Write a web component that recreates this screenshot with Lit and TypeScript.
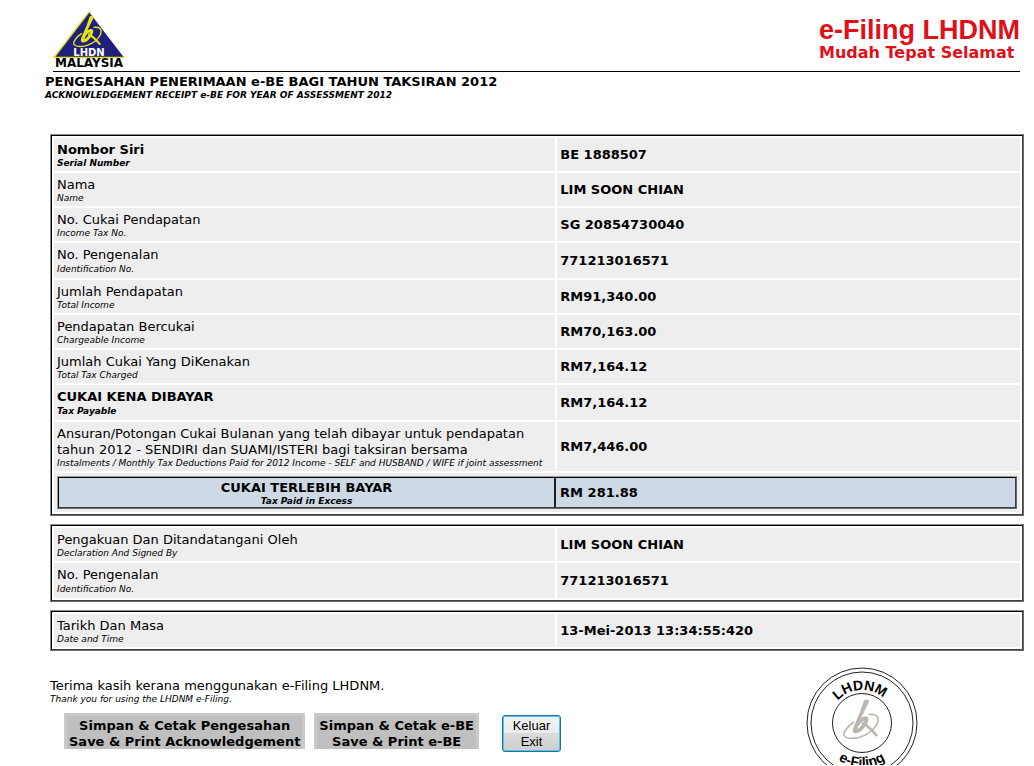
import { LitElement, html, css, svg, nothing } from "lit";
import { customElement } from "lit/decorators.js";
import { classMap } from "lit/directives/class-map.js";

interface Row {
  ms: string[];
  en: string;
  value: string;
  bold?: boolean;
  tall?: boolean;
}

const assessment: Row[] = [
  { ms: ["Nombor Siri"], en: "Serial Number", value: "BE 1888507", bold: true },
  { ms: ["Nama"], en: "Name", value: "LIM SOON CHIAN" },
  { ms: ["No. Cukai Pendapatan"], en: "Income Tax No.", value: "SG 20854730040" },
  { ms: ["No. Pengenalan"], en: "Identification No.", value: "771213016571", tall: true },
  { ms: ["Jumlah Pendapatan"], en: "Total Income", value: "RM91,340.00" },
  { ms: ["Pendapatan Bercukai"], en: "Chargeable Income", value: "RM70,163.00" },
  { ms: ["Jumlah Cukai Yang DiKenakan"], en: "Total Tax Charged", value: "RM7,164.12" },
  { ms: ["CUKAI KENA DIBAYAR"], en: "Tax Payable", value: "RM7,164.12", bold: true, tall: true },
  {
    ms: [
      "Ansuran/Potongan Cukai Bulanan yang telah dibayar untuk pendapatan",
      "tahun 2012 - SENDIRI dan SUAMI/ISTERI bagi taksiran bersama",
    ],
    en: "Instalments / Monthly Tax Deductions Paid for 2012 Income - SELF and HUSBAND / WIFE if joint assessment",
    value: "RM7,446.00",
  },
];

const declaration: Row[] = [
  { ms: ["Pengakuan Dan Ditandatangani Oleh"], en: "Declaration And Signed By", value: "LIM SOON CHIAN" },
  { ms: ["No. Pengenalan"], en: "Identification No.", value: "771213016571", tall: true },
];

const timestamp: Row[] = [
  { ms: ["Tarikh Dan Masa"], en: "Date and Time", value: "13-Mei-2013 13:34:55:420" },
];

// The "hx" monogram, drawn in a 36 x 41 box.
const monogram = svg`
  <path d="M21 1.5 Q24 0 26 1 L25.5 4 L18 19 Q23 16 25 18.5 Q26.5 22 22 28 Q17 34.5 12 34.5
           Q8.5 33.5 10.5 28 L17 13 Z
           M14 30 Q18 28.5 21.5 21.5 Q17.5 22.5 14 30 Z" fill-rule="evenodd" fill="currentColor"/>
  <path d="M19 24 Q26 27 34 37" stroke="currentColor" stroke-width="2.6" fill="none"/>
  <path d="M11 23 Q1 30 .8 36 Q3 41 16 38.5 Q30 34 34.5 24 Q37.5 14 25.5 15.5"
        stroke="currentColor" stroke-width="1.7" fill="none"/>`;

@customElement("app-root")
export class AppRoot extends LitElement {
  static styles = css`
    :host {
      display: block;
      box-sizing: border-box;
      min-height: 100vh;
      padding: 11px 10px 0 50px;
      background: #fff;
      color: #000;
      font: 13px/16px Verdana, "DejaVu Sans", sans-serif;
    }
    .banner {
      display: flex;
      justify-content: space-between;
      height: 60px;
      margin: 0 4px 0 3px;
      border-bottom: 1px solid #000;
    }
    .logo { display: block; width: 72px; height: 58px; }
    .brand { color: #e01018; padding-top: 5px; }
    .brand-name { font: bold 27px/28px "Liberation Sans", Arial, sans-serif; }
    .brand-motto { font: bold 16px/18px "DejaVu Sans", sans-serif; }
    .title { margin: 2px 0 33px -5px; font-size: 13px; line-height: 16px; }
    .en { display: block; font-size: 9px; line-height: 11px; font-style: italic; }
    .ms { display: block; }
    .frame {
      margin-bottom: 8px;
      border: 1px solid;
      border-color: #808a90 #696969 #696969 #808a90;
    }
    .grid {
      width: 100%;
      table-layout: fixed;
      border-collapse: separate;
      border-spacing: 2px;
      border: 1px solid;
      border-color: #000 #404040 #404040 #000;
    }
    .label-col { width: 52%; }
    th, td {
      text-align: left;
      font-weight: normal;
      background: #eee;
      padding: 0 3px;
      vertical-align: middle;
    }
    th { padding: 4px 0 2px 3px; white-space: nowrap; }
    td { font-weight: bold; }
    .bold { font-weight: bold; }
    .tall .en { line-height: 13px; }
    .excess-cell { padding: 3px; }
    .excess-frame {
      border: 1px solid;
      border-color: #a0a0a0 #696969 #696969 #a0a0a0;
    }
    .excess {
      width: 100%;
      table-layout: fixed;
      border-collapse: separate;
      border-spacing: 0;
      border: 1px solid;
      border-color: #000 #404040 #404040 #000;
    }
    .excess th, .excess td { background: #cdd9e5; }
    .excess th {
      padding: 2px 0 0;
      text-align: center;
      font-weight: bold;
      border-right: 2px solid #202020;
    }
    .excess td { padding: 0 4px; }
    .footer { display: flex; justify-content: space-between; padding: 8px 106px 0 0; }
    .thanks { margin: 0; padding-top: 11px; }
    .actions { display: flex; align-items: flex-start; margin-top: 8px; padding-left: 14px; }
    button { font: inherit; color: inherit; cursor: pointer; }
    .save {
      margin-right: 9px;
      height: 36px;
      padding: 2px 2px 0;
      border: 3px solid #c9c9c9;
      border-bottom-width: 0;
      background: #bfbfbf;
      font-weight: bold;
    }
    .exit {
      width: 59px;
      height: 37px;
      margin: 2px 0 0 14px;
      padding: 0;
      border: 1px solid #2c6f96;
      border-radius: 3px;
      box-shadow: inset 0 0 0 1px #48c8f0;
      background: linear-gradient(#f2f2f2, #ebebeb 48%, #dadada 50%, #cfcfcf);
      font: 13px/16px "Liberation Sans", Arial, sans-serif;
    }
    .seal { display: block; flex: none; width: 112px; height: 98px; color: #bcb6ae; }
  `;

  private label(row: Row) {
    return html`${row.ms.map((line) => html`<span class="ms">${line}</span>`)}<span class="en">${row.en}</span>`;
  }

  private grid(rows: Row[], extra: unknown = nothing) {
    return html`
      <div class="frame">
        <table class="grid">
          <colgroup><col class="label-col" /><col /></colgroup>
          <tbody>
            ${rows.map(
              (row) => html`<tr class=${classMap({ tall: !!row.tall })}>
                <th scope="row" class=${classMap({ bold: !!row.bold })}>${this.label(row)}</th>
                <td>${row.value}</td>
              </tr>`
            )}
            ${extra}
          </tbody>
        </table>
      </div>`;
  }

  private excess() {
    return html`<tr>
      <td class="excess-cell" colspan="2">
        <div class="excess-frame">
          <table class="excess">
            <colgroup><col class="label-col" /><col /></colgroup>
            <tbody>
              <tr>
                <th scope="row">${this.label({ ms: ["CUKAI TERLEBIH BAYAR"], en: "Tax Paid in Excess", value: "" })}</th>
                <td>RM 281.88</td>
              </tr>
            </tbody>
          </table>
        </div>
      </td>
    </tr>`;
  }

  render() {
    return html`
      <header class="banner">
        <svg class="logo" viewBox="0 0 72 58" role="img" aria-label="LHDN Malaysia">
          <path d="M36 1 L71 46.5 H1 Z" fill="#20207c" />
          <path d="M36 1 L1 46.5 H71" fill="none" stroke="#dede20" stroke-width="1.4" />
          <g transform="translate(20 4) scale(.8)" color="#e4e41c">${monogram}</g>
          <text x="36" y="45" text-anchor="middle" font-family="DejaVu Sans" font-weight="bold" font-size="10" fill="#fff">LHDN</text>
          <text x="36" y="56" text-anchor="middle" font-family="DejaVu Sans" font-weight="bold" font-size="12">MALAYSIA</text>
        </svg>
        <div class="brand">
          <div class="brand-name">e-Filing LHDNM</div>
          <div class="brand-motto">Mudah Tepat Selamat</div>
        </div>
      </header>
      <h1 class="title">
        <span class="ms">PENGESAHAN PENERIMAAN e-BE BAGI TAHUN TAKSIRAN 2012</span>
        <span class="en">ACKNOWLEDGEMENT RECEIPT e-BE FOR YEAR OF ASSESSMENT 2012</span>
      </h1>
      <main>
        ${this.grid(assessment, this.excess())} ${this.grid(declaration)} ${this.grid(timestamp)}
      </main>
      <footer class="footer">
        <div>
          <p class="thanks">
            <span class="ms">Terima kasih kerana menggunakan e-Filing LHDNM.</span>
            <span class="en">Thank you for using the LHDNM e-Filing.</span>
          </p>
          <div class="actions">
            <button class="save" type="button">Simpan &amp; Cetak Pengesahan<br />Save &amp; Print Acknowledgement</button>
            <button class="save" type="button">Simpan &amp; Cetak e-BE<br />Save &amp; Print e-BE</button>
            <button class="exit" type="button">Keluar<br />Exit</button>
          </div>
        </div>
        <svg class="seal" viewBox="0 0 112 98" role="img" aria-label="LHDNM e-Filing">
          <defs>
            <path id="arc-top" d="M23 56 A33 33 0 0 1 89 56" />
            <path id="arc-bottom" d="M12 56 A44 44 0 0 0 100 56" />
          </defs>
          <g fill="none" stroke="#222">
            <circle cx="56" cy="56" r="55" />
            <circle cx="56" cy="56" r="51" />
            <circle cx="56" cy="56" r="29.5" />
          </g>
          <g transform="translate(37 32)">${monogram}</g>
          <g font-family="Liberation Sans" font-weight="bold" font-size="14" text-anchor="middle" fill="#000">
            <text><textPath href="#arc-top" startOffset="48%">LHDNM</textPath></text>
            <text><textPath href="#arc-bottom" startOffset="50%">e-Filing</textPath></text>
          </g>
        </svg>
      </footer>
    `;
  }
}
